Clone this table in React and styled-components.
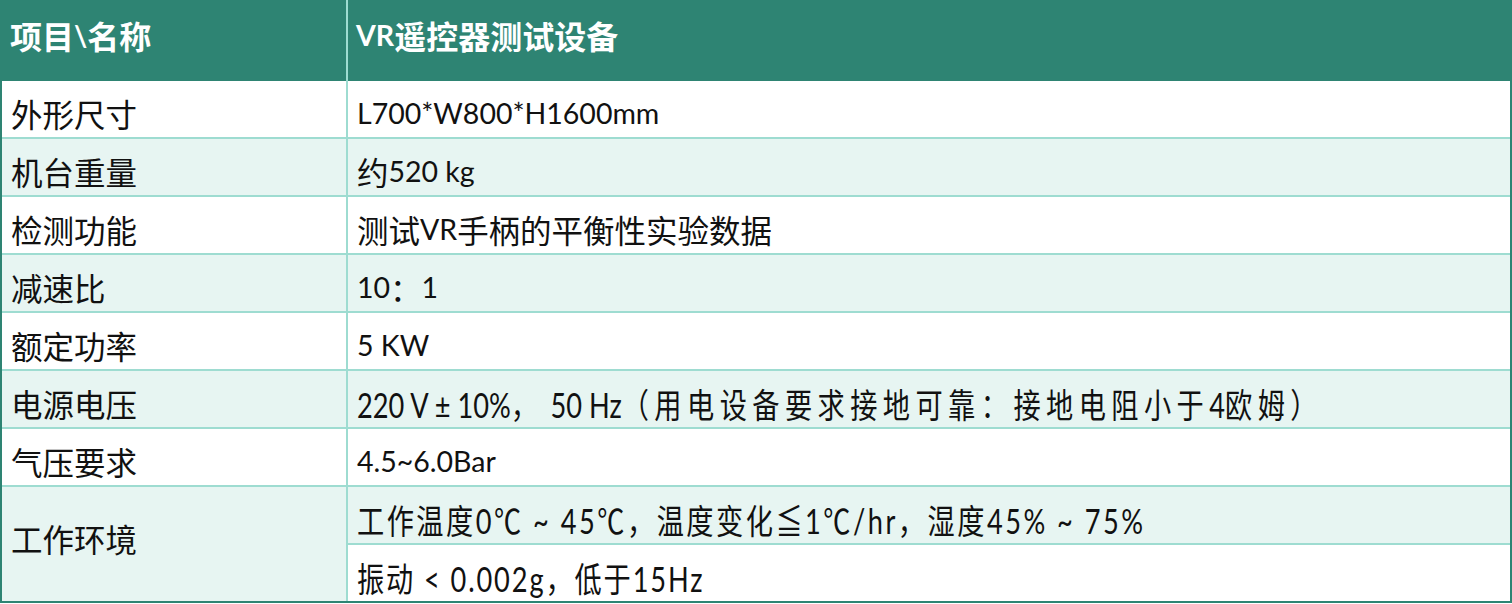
import React from "react";
import styled, { createGlobalStyle } from "styled-components";

const dark = "#2E8473";
const line = "#9EDCD1";
const tint = "#E7F5F2";

const GlobalStyle = createGlobalStyle`
  html, body {
    margin: 0;
    padding: 0;
    background: #ffffff;
  }
  body {
    font-family: "Lato", "Noto Sans CJK SC", sans-serif;
    color: #111;
  }
`;

const Table = styled.div`
  width: 1512px;
  box-sizing: border-box;
  display: grid;
  grid-template-columns: 346px 1fr;
  grid-template-rows: 81px repeat(8, 58px) 56px;
  border-left: 2px solid ${dark};
  border-right: 2px solid ${dark};
  border-bottom: 2px solid ${dark};
`;

const Cell = styled.div`
  box-sizing: border-box;
  display: flex;
  align-items: center;
  overflow: hidden;
  padding: ${(p) => (p.$head ? "0 0 12px 8px" : "8px 0 0 9px")};
  background: ${(p) => (p.$head ? dark : p.$light ? tint : "#fff")};
  color: ${(p) => (p.$head ? "#fff" : "#111")};
  font-size: ${(p) => (p.$label && !p.$head ? "31.5px" : "28.5px")};
  font-weight: ${(p) => (p.$head ? 700 : 400)};
  white-space: nowrap;
  border-bottom: ${(p) => (p.$head || p.$last ? "none" : `2px solid ${line}`)};
  border-right: ${(p) => (p.$label ? `2px solid ${line}` : "none")};
  grid-row: ${(p) => (p.$span ? `span ${p.$span}` : "auto")};
`;

const MergedCell = styled(Cell)`
  padding-top: 0;
  padding-bottom: 12px;
`;

// CJK runs sit a little larger than the latin text around them
const Han = styled.span`
  font-size: ${(p) => p.$size || "1.105em"};
  ${(p) => (p.$gap != null ? `letter-spacing: ${p.$gap}px;` : "")}
`;

// rows printed with the narrow, tall face
const Squeeze = styled.span`
  display: inline-block;
  font-size: 34px;
  letter-spacing: ${(p) => p.$gap}px;
  transform: scaleX(0.8);
  transform-origin: left center;
`;

const cjk = /([\u4e00-\u9fff\u3000-\u303f\uff00-\uffef]+)/;

function Mixed({ text, size, gap }) {
  return text.split(cjk).map((part, i) =>
    i % 2 === 1 ? (
      <Han key={i} $size={size} $gap={gap}>
        {part}
      </Han>
    ) : (
      part
    )
  );
}

function Narrow({ text, latin, han }) {
  return (
    <Squeeze $gap={latin}>
      <Mixed text={text} size="1em" gap={han} />
    </Squeeze>
  );
}

const rows = [
  ["外形尺寸", "L700*W800*H1600mm"],
  ["机台重量", "约520 kg"],
  ["检测功能", "测试VR手柄的平衡性实验数据"],
  ["减速比", "10： 1"],
  ["额定功率", "5 KW"],
  ["电源电压", "220 V ± 10%， 50 Hz（用电设备要求接地可靠：接地电阻小于4欧姆）", [0, 6.8]],
  ["气压要求", "4.5~6.0Bar"],
];

export default function App() {
  return (
    <>
      <GlobalStyle />
      <Table>
        <Cell $head $label>
          <Mixed text="项目\名称" size="1.123em" />
        </Cell>
        <Cell $head>
          <Mixed text="VR遥控器测试设备" size="1.123em" />
        </Cell>
        {rows.map(([name, value, narrow], i) => (
          <React.Fragment key={name}>
            <Cell $label $light={i % 2 === 1}>
              {name}
            </Cell>
            <Cell $light={i % 2 === 1}>
              {narrow ? (
                <Narrow text={value} latin={narrow[0]} han={narrow[1]} />
              ) : (
                <Mixed text={value} />
              )}
            </Cell>
          </React.Fragment>
        ))}
        <MergedCell $label $light $last $span={2}>
          工作环境
        </MergedCell>
        <Cell $light>
          <Narrow text="工作温度0℃ ~ 45℃，温度变化≦1℃/hr，湿度45% ~ 75%" latin={3.1} />
        </Cell>
        <Cell $last>
          <Narrow text="振动 < 0.002g，低于15Hz" latin={2.35} />
        </Cell>
      </Table>
    </>
  );
}
